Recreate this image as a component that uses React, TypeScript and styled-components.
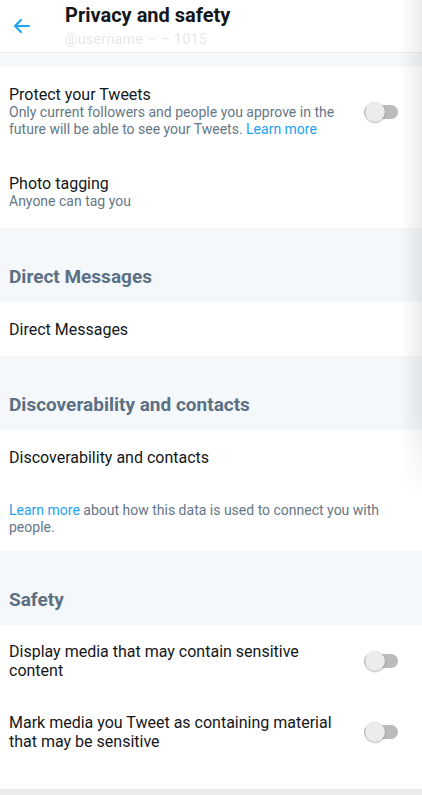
import React from "react";
import styled, { createGlobalStyle } from "styled-components";

const GlobalStyle = createGlobalStyle`
  html, body {
    margin: 0;
    padding: 0;
    background: #f5f8fa;
    font-family: Roboto, "Noto Sans", "Liberation Sans", sans-serif;
    -webkit-font-smoothing: antialiased;
  }
  * { box-sizing: border-box; }
`;

const Page = styled.div`
  position: relative;
  width: 422px;
  min-height: 795px;
  background: #f5f8fa;
  overflow: hidden;
  display: flex;
  flex-direction: column;
`;

const Header = styled.header`
  height: 53px;
  background: #ffffff;
  border-bottom: 1px solid #e9edf0;
  display: flex;
  align-items: flex-start;
`;

const BackButton = styled.button`
  width: 65px;
  height: 52px;
  border: 0;
  background: transparent;
  padding: 19px 0 0 13px;
  display: flex;
  align-items: flex-start;
  justify-content: flex-start;
  cursor: pointer;
`;

const HeaderText = styled.div`
  display: flex;
  flex-direction: column;
  padding-top: 3px;
`;

const HeaderTitle = styled.h1`
  margin: 0;
  font-size: 20px;
  line-height: 24px;
  font-weight: 700;
  color: #14171a;
`;

const HeaderSub = styled.div`
  margin-top: 4px;
  font-size: 14px;
  line-height: 17px;
  font-weight: 400;
  color: #e4e8eb;
  filter: blur(0.6px);
  letter-spacing: 0.4px;
`;

const Gap = styled.div<{ $h: number }>`
  height: ${(p) => p.$h}px;
`;

const Section = styled.section<{ $padBottom?: number }>`
  background: #ffffff;
  display: flex;
  flex-direction: column;
  padding-bottom: ${(p) => p.$padBottom ?? 0}px;
`;

const SectionHeader = styled.h2`
  margin: 0;
  padding: 38px 9px 14px;
  font-size: 19px;
  line-height: 22px;
  font-weight: 700;
  color: #5b7083;
`;

const Row = styled.div<{ $pt?: number; $pb?: number }>`
  display: flex;
  align-items: center;
  justify-content: space-between;
  gap: 16px;
  padding: ${(p) => p.$pt ?? 18}px 24px ${(p) => p.$pb ?? 18}px 9px;
`;

const RowText = styled.div`
  flex: 1;
  min-width: 0;
  display: flex;
  flex-direction: column;
`;

const RowTitle = styled.div`
  font-size: 16px;
  line-height: 19px;
  color: #14171a;
`;

const RowSub = styled.div`
  font-size: 14px;
  line-height: 17px;
  color: #657786;
`;

const Link = styled.a`
  color: #1da1f2;
  text-decoration: none;
`;

const Footnote = styled.p`
  margin: 0;
  padding: 17px 9px 15px;
  font-size: 14px;
  line-height: 17px;
  color: #657786;
`;

const Toggle = styled.div`
  position: relative;
  width: 34px;
  height: 20px;
  flex: none;
  display: flex;
  align-items: center;
`;

const Track = styled.div`
  width: 34px;
  height: 14px;
  border-radius: 7px;
  background: #bbbbbb;
`;

const Thumb = styled.div`
  position: absolute;
  left: 1px;
  top: 0;
  width: 20px;
  height: 20px;
  border-radius: 50%;
  background: #ececec;
  box-shadow: 0 1px 2px rgba(0, 0, 0, 0.28), 0 0 1px rgba(0, 0, 0, 0.12);
`;

const BottomBar = styled.div`
  height: 6px;
  background: #ebebeb;
`;

const EdgeShadow = styled.div`
  position: absolute;
  top: 0;
  right: 0;
  width: 22px;
  height: 500px;
  pointer-events: none;
  background: linear-gradient(to left, rgba(0, 0, 0, 0.075), rgba(0, 0, 0, 0));
  -webkit-mask-image: linear-gradient(to bottom, #000 82%, transparent 100%);
  mask-image: linear-gradient(to bottom, #000 82%, transparent 100%);
`;

const Switch = () => (
  <Toggle>
    <Track />
    <Thumb />
  </Toggle>
);

const BackArrow = () => (
  <svg width="17" height="14" viewBox="0 0 17 14" fill="none">
    <path
      d="M16 7H2M8 1L2 7l6 6"
      stroke="#1da1f2"
      strokeWidth="2"
      strokeLinecap="round"
      strokeLinejoin="round"
    />
  </svg>
);

export default function App() {
  return (
    <>
      <GlobalStyle />
      <Page>
        <Header>
          <BackButton aria-label="Back">
            <BackArrow />
          </BackButton>
          <HeaderText>
            <HeaderTitle>Privacy and safety</HeaderTitle>
            <HeaderSub>@username – – 1015</HeaderSub>
          </HeaderText>
        </Header>
        <Gap $h={14} />
        <Section>
          <Row>
            <RowText>
              <RowTitle>Protect your Tweets</RowTitle>
              <RowSub>
                Only current followers and people you approve in the future
                will be able to see your Tweets. <Link>Learn more</Link>
              </RowSub>
            </RowText>
            <Switch />
          </Row>
          <Row>
            <RowText>
              <RowTitle>Photo tagging</RowTitle>
              <RowSub>Anyone can tag you</RowSub>
            </RowText>
          </Row>
        </Section>
        <SectionHeader>Direct Messages</SectionHeader>
        <Section>
          <Row $pb={17}>
            <RowText>
              <RowTitle>Direct Messages</RowTitle>
            </RowText>
          </Row>
        </Section>
        <SectionHeader>Discoverability and contacts</SectionHeader>
        <Section>
          <Row>
            <RowText>
              <RowTitle>Discoverability and contacts</RowTitle>
            </RowText>
          </Row>
          <Footnote>
            <Link>Learn more</Link> about how this data is used to connect you
            with people.
          </Footnote>
        </Section>
        <SectionHeader>Safety</SectionHeader>
        <Section $padBottom={22}>
          <Row $pt={17} $pb={16}>
            <RowText>
              <RowTitle>Display media that may contain sensitive content</RowTitle>
            </RowText>
            <Switch />
          </Row>
          <Row $pt={17} $pb={16}>
            <RowText>
              <RowTitle>
                Mark media you Tweet as containing material that may be
                sensitive
              </RowTitle>
            </RowText>
            <Switch />
          </Row>
        </Section>
        <BottomBar />
        <EdgeShadow />
      </Page>
    </>
  );
}
